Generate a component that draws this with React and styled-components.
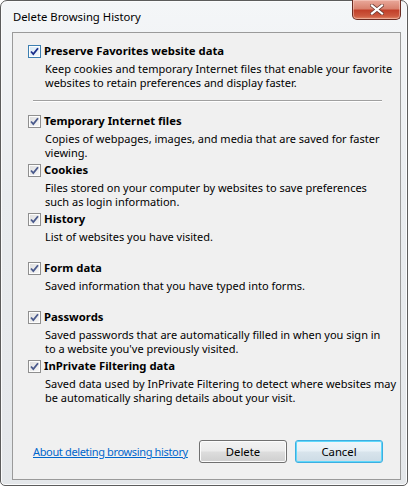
import React from 'react';
import styled, { createGlobalStyle } from 'styled-components';

const GlobalStyle = createGlobalStyle`
  html, body {
    margin: 0;
    padding: 0;
    background: #ffffff;
  }
  body {
    font-family: "Noto Sans", "Open Sans", sans-serif;
    font-size: 11px;
    color: #000000;
  }
`;

const Window = styled.div`
  box-sizing: border-box;
  width: 408px;
  height: 486px;
  display: flex;
  flex-direction: column;
  border: 1px solid #5c5c5c;
  border-radius: 7px 7px 5px 5px;
  background: linear-gradient(180deg, #f4f6f8 0%, #e9ecef 40%, #e4e7ea 100%);
  box-shadow: inset 0 0 0 1px #fbfcfd;
  padding: 0 6px 5px 11px;
`;

const TitleBar = styled.div`
  height: 31px;
  display: flex;
  justify-content: space-between;
  align-items: flex-start;
`;

const Title = styled.div`
  padding: 8px 0 0 1px;
  font-size: 11.3px;
  line-height: 16px;
  color: #000;
`;

const CloseButton = styled.div`
  box-sizing: border-box;
  width: 49px;
  height: 20px;
  margin-top: -1px;
  display: flex;
  align-items: center;
  justify-content: center;
  border: 1px solid #6b2c22;
  border-top: none;
  border-radius: 0 0 5px 5px;
  background: linear-gradient(180deg, #e9a99b 0%, #d9826f 45%, #c2402a 55%, #cd5a40 85%, #e28a6a 100%);
  box-shadow: inset 0 0 0 1px rgba(255, 220, 210, 0.45);
`;

const Panel = styled.div`
  flex: 1;
  display: flex;
  flex-direction: column;
  border: 1px solid #9a9a9a;
  background: #f0f0f0;
  padding: 10px 17px 16px 15px;
`;

const Item = styled.div`
  display: flex;
  flex-direction: column;
  margin-bottom: ${(p) => (p.$last ? 0 : 2)}px;
`;

const Heading = styled.label`
  display: flex;
  align-items: center;
  gap: 3px;
  height: 16px;
  font-weight: bold;
  font-size: 11.3px;
  line-height: 16px;
`;

const Box = styled.span`
  box-sizing: border-box;
  width: 13px;
  height: 13px;
  display: flex;
  align-items: center;
  justify-content: center;
  border: 1px solid ${(p) => (p.$hot ? '#3c7fb1' : '#8f8f8f')};
  background: ${(p) =>
    p.$hot
      ? 'linear-gradient(135deg, #d6e8f5 0%, #f4f9fd 100%)'
      : 'linear-gradient(135deg, #dcdcdc 0%, #fafafa 100%)'};
  box-shadow: inset 0 0 0 1px #fdfdfd;
`;

const Desc = styled.div`
  margin: 3px 0 0 17px;
  min-height: 28px;
  line-height: 14px;
  white-space: nowrap;
`;

const Separator = styled.div`
  height: 1px;
  margin: 10px 1px 12px 5px;
  background: #a0a0a0;
  box-shadow: 0 1px 0 #ffffff;
`;

const Footer = styled.div`
  margin-top: auto;
  display: flex;
  align-items: center;
  padding-left: 5px;
`;

const Link = styled.a`
  color: #0066cc;
  text-decoration: underline;
  white-space: nowrap;
  letter-spacing: -0.35px;
  cursor: pointer;
  margin-right: auto;
`;

const Button = styled.button`
  box-sizing: border-box;
  width: 88px;
  height: 23px;
  margin-left: ${(p) => (p.$gap ? 8 : 0)}px;
  font-family: inherit;
  font-size: 11.3px;
  color: #000;
  border-radius: 3px;
  border: 1px solid ${(p) => (p.$focus ? '#3daee0' : '#707070')};
  background: ${(p) =>
    p.$focus
      ? 'linear-gradient(180deg, #f0f6fa 0%, #e6eff5 48%, #d8e4ec 52%, #ccdbe5 100%)'
      : 'linear-gradient(180deg, #f2f2f2 0%, #ebebeb 48%, #dddddd 52%, #cfcfcf 100%)'};
  box-shadow: ${(p) => (p.$focus ? 'inset 0 0 0 1px #5fd8fb' : 'inset 0 0 0 1px #fcfcfc')};
`;

const Check = ({ hot }) => (
  <svg width="9" height="9" viewBox="0 0 9 9">
    <path
      d="M1 4.5 L3.3 7 L8 1.2"
      fill="none"
      stroke={hot ? '#1b2f8c' : '#4a5a8c'}
      strokeWidth="1.8"
    />
  </svg>
);

const CloseGlyph = () => (
  <svg width="14" height="11" viewBox="0 0 14 11">
    <path d="M2 1.5 L12 9.5 M12 1.5 L2 9.5" stroke="#6b3b33" strokeWidth="3.6" strokeLinecap="square" />
    <path d="M2 1.5 L12 9.5 M12 1.5 L2 9.5" stroke="#ffffff" strokeWidth="2.2" strokeLinecap="square" />
  </svg>
);

const items = [
  {
    title: 'Temporary Internet files',
    lines: ['Copies of webpages, images, and media that are saved for faster', 'viewing.'],
  },
  {
    title: 'Cookies',
    lines: ['Files stored on your computer by websites to save preferences', 'such as login information.'],
  },
  { title: 'History', lines: ['List of websites you have visited.'] },
  { title: 'Form data', lines: ['Saved information that you have typed into forms.'] },
  {
    title: 'Passwords',
    lines: ['Saved passwords that are automatically filled in when you sign in', "to a website you've previously visited."],
  },
  {
    title: 'InPrivate Filtering data',
    lines: ['Saved data used by InPrivate Filtering to detect where websites may', 'be automatically sharing details about your visit.'],
  },
];

const Option = ({ title, lines, hot, last }) => (
  <Item $last={last}>
    <Heading>
      <Box $hot={hot}>
        <Check hot={hot} />
      </Box>
      {title}
    </Heading>
    <Desc>
      {lines.map((l, i) => (
        <div key={i}>{l}</div>
      ))}
    </Desc>
  </Item>
);

const App = () => (
  <>
    <GlobalStyle />
    <Window>
      <TitleBar>
        <Title>Delete Browsing History</Title>
        <CloseButton>
          <CloseGlyph />
        </CloseButton>
      </TitleBar>
      <Panel>
        <Option
          hot
          last
          title="Preserve Favorites website data"
          lines={['Keep cookies and temporary Internet files that enable your favorite', 'websites to retain preferences and display faster.']}
        />
        <Separator />
        {items.map((it, i) => (
          <Option key={it.title} title={it.title} lines={it.lines} last={i === items.length - 1} />
        ))}
        <Footer>
          <Link>About deleting browsing history</Link>
          <Button>Delete</Button>
          <Button $gap $focus>Cancel</Button>
        </Footer>
      </Panel>
    </Window>
  </>
);

export default App;
